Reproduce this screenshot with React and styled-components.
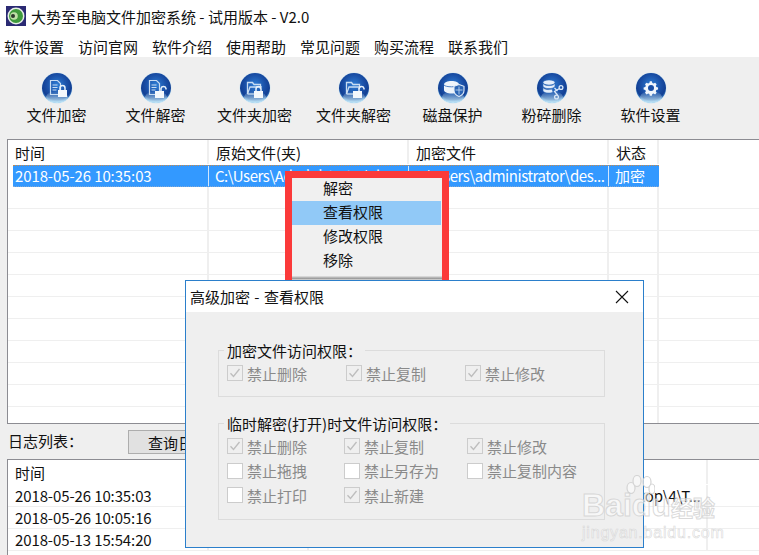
import React from "react";
import styled, { createGlobalStyle } from "styled-components";

const Global = createGlobalStyle`
  html, body { margin: 0; padding: 0; background: #fff; overflow: hidden; }
  * { box-sizing: border-box; }
  body { font-family: "Noto Sans CJK SC", "Noto Sans", sans-serif; font-size: 15px; color: #111; }
`;

const Win = styled.div`
  position: relative;
  width: 759px;
  height: 555px;
  overflow: hidden;
  display: flex;
  flex-direction: column;
  background: #efefef;
`;
const TitleBar = styled.div`
  height: 32px;
  flex: none;
  background: #fff;
  display: flex;
  align-items: center;
  padding-left: 6px;
  gap: 5px;
  line-height: 31px;
`;
const MenuBar = styled.div`
  height: 25px;
  flex: none;
  background: #fff;
  display: flex;
  padding-left: 4px;
  gap: 14px;
  line-height: 29px;
`;
const Toolbar = styled.div`
  height: 82px;
  flex: none;
  display: flex;
  padding: 15px 0 0 7px;
`;
const Tool = styled.div`
  width: 99px;
  display: flex;
  flex-direction: column;
  align-items: center;
  line-height: 22px;
  svg { display: block; }
`;
const Panel = styled.div`
  margin-left: 7px;
  background: #fff;
  border: 1px solid #8c8c92;
  border-right: 0;
  height: ${(p) => p.$h}px;
  overflow: hidden;
  flex: none;
`;
const Row = styled.div`
  display: grid;
  grid-template-columns: ${(p) => p.$cols};
  height: ${(p) => p.$h || 22}px;
  line-height: ${(p) => p.$h || 22}px;
  border-bottom: 1px solid ${(p) => (p.$header ? "transparent" : "#efefef")};
`;
const Cell = styled.div`
  border-right: 2px solid ${(p) => (p.$noLine ? "transparent" : "#efefef")};
  padding: 0 5px 0 7px;
  white-space: nowrap;
  overflow: hidden;
  text-align: ${(p) => p.$align || "left"};
  letter-spacing: ${(p) => (p.$num ? "-0.11px" : "0")};
`;
const SelectedRow = styled.div`
  display: grid;
  grid-template-columns: 196px 200px 200px 50px;
  margin-left: 5px;
  width: 646px;
  height: 22px;
  line-height: 20px;
  background: #3399ff;
  color: #fff;
  border-top: 1px dotted #c98a4a;
  border-bottom: 1px dotted #7fa8d8;
`;
const SelCell = styled.div`
  border-right: 1px solid #cfe6ff;
  padding-left: ${(p) => p.$pad}px;
  white-space: nowrap;
  overflow: hidden;
  letter-spacing: ${(p) => (p.$tight ? "-0.45px" : "-0.11px")};
  &:last-child { border-right: 0; }
`;
const LogBar = styled.div`
  height: 35px;
  flex: none;
  display: flex;
  align-items: center;
  padding-left: 8px;
`;
const LogLabel = styled.span`
  width: 120px;
  margin-bottom: 3px;
`;
const QueryButton = styled.div`
  width: 110px;
  height: 24px;
  background: #e1e1e1;
  border: 1px solid #adadad;
  line-height: 23px;
  padding-left: 19px;
`;

/* overlays */
const RedBox = styled.div`
  position: absolute;
  left: 285px;
  top: 171px;
  width: 164px;
  height: 112px;
  border: 7px solid #fb3a3a;
  border-bottom: 0;
  background: #f0f0f0;
`;
const Menu = styled.div`
  display: flex;
  flex-direction: column;
  height: 100%;
`;
const MenuItem = styled.div`
  height: 24px;
  line-height: 22px;
  padding-left: 31px;
  width: 149px;
  background: ${(p) => (p.$active ? "#91c9f7" : "transparent")};
  &:first-child { height: 23px; line-height: 20px; }
`;
const MenuShadow = styled.div`
  margin-top: 3px;
  height: 4px;
  width: 150px;
  background: linear-gradient(#e6e6e6, #999 60%, #ddd);
`;
const Dialog = styled.div`
  position: absolute;
  left: 185px;
  top: 280px;
  width: 459px;
  height: 268px;
  border: 1px solid #2b7fcb;
  background: #efefef;
  display: flex;
  flex-direction: column;
`;
const DialogTitle = styled.div`
  height: 31px;
  flex: none;
  background: #fff;
  display: flex;
  align-items: center;
  justify-content: space-between;
  padding: 0 14px 0 4px;
  line-height: 31px;
  word-spacing: 1px;
`;
const DialogBody = styled.div`
  padding: 38px 38px 0 32px;
  display: flex;
  flex-direction: column;
  gap: 26px;
`;
const Group = styled.div`
  position: relative;
  height: ${(p) => p.$h}px;
  flex: none;
  border: 1px solid #dcdcdc;
  padding: ${(p) => p.$pt}px 0 0 8px;
  display: grid;
  grid-template-columns: ${(p) => p.$cols};
  grid-auto-rows: 24.5px;
`;
const Legend = styled.span`
  position: absolute;
  left: 5px;
  top: -10px;
  padding: 0 3px;
  background: #efefef;
  line-height: 20px;
  white-space: nowrap;
`;
const Check = styled.div`
  display: flex;
  align-items: center;
  gap: 4px;
  color: #8a8a8a;
  white-space: nowrap;
`;
const Box = styled.span`
  width: 16px;
  height: 16px;
  flex: none;
  border: 1px solid #cccccc;
  background: ${(p) => (p.$checked ? "#efefef" : "#fff")};
  display: flex;
  align-items: center;
  justify-content: center;
`;
const Watermark = styled.div`
  position: absolute;
  left: 581px;
  top: 475px;
  width: 140px;
  height: 66px;
  pointer-events: none;
  color: rgba(255, 255, 255, 0.55);
  font-family: "Liberation Sans", sans-serif;
`;
const BaiduWord = styled.div`
  position: absolute;
  left: 1px;
  top: 12px;
  display: flex;
  align-items: baseline;
  white-space: nowrap;
  font-size: 32px;
  font-weight: 700;
  line-height: 36px;
  -webkit-text-stroke: 1px rgba(205, 205, 205, 0.75);
`;
const JingWord = styled.div`
  position: absolute;
  left: 1px;
  top: 49px;
  white-space: nowrap;
  font-size: 16px;
  line-height: 17px;
  letter-spacing: 0.8px;
  -webkit-text-stroke: 0.6px rgba(205, 205, 205, 0.75);
`;
const JingCn = styled.span`
  font-family: "Noto Sans CJK SC", sans-serif;
  font-size: 22px;
`;
const Paw = styled.svg`
  position: absolute;
  left: 44px;
  top: 0;
`;

const Grad = ({ id }) => (
  <defs>
    <radialGradient id={id} cx="50%" cy="40%" r="62%">
      <stop offset="0" stopColor="#2f7fd6" />
      <stop offset="0.55" stopColor="#1a4fa6" />
      <stop offset="0.8" stopColor="#123f93" />
      <stop offset="1" stopColor="#5fb0ea" />
    </radialGradient>
    <linearGradient id={id + "s"} x1="0" y1="0" x2="0" y2="1">
      <stop offset="0" stopColor="#bfe6f7" stopOpacity="0" />
      <stop offset="1" stopColor="#cdeefb" stopOpacity="0.95" />
    </linearGradient>
  </defs>
);

const lock = (x, y, open) => (
  <g>
    <rect x={x} y={y} width="9" height="7" fill="#f4f8fc" />
    {open ? (
      <path d={`M${x + 6} ${y} v-2.500 a2.600 2.600 0 0 1 5 0 v1`} fill="none" stroke="#e8f2fb" strokeWidth="1.500" />
    ) : (
      <path d={`M${x + 2} ${y} v-2 a2.500 2.500 0 0 1 5 0 v2`} fill="none" stroke="#e8f2fb" strokeWidth="1.500" />
    )}
  </g>
);
const doc = (
  <g fill="none" stroke="#c9ddf2" strokeWidth="1.200">
    <path d="M8.500 7.500h7l3 3v11h-10z" />
    <path d="M10.500 12h5M10.500 14.500h5M10.500 17h4" />
  </g>
);
const folder = (
  <g fill="none" stroke="#c9ddf2" strokeWidth="1.300">
    <path d="M7.500 21v-11.500h5l1.500 2h6.500v3" />
    <path d="M7.500 21l2.500-7h11l-1 2" />
    <path d="M7.500 21h9" />
  </g>
);
const glyphs = {
  fileLock: <>{doc}{lock(16, 17, false)}</>,
  fileOpen: <>{doc}{lock(14, 18, true)}</>,
  folderLock: <>{folder}{lock(14, 18, false)}</>,
  folderOpen: <>{folder}{lock(14, 18, true)}</>,
  disk: (
    <>
      <path d="M6 11.500c0-2.200 3.500-3.500 7.500-3.500s7.500 1.300 7.500 3.500v5.500c0 2.200-3.500 3.500-7.500 3.500s-7.500-1.300-7.500-3.500z" fill="#eef4fb" />
      <path d="M6 12c1.500 2.400 13.500 2.400 15 0" fill="none" stroke="#3f75bd" strokeWidth="0.900" />
      <path d="M21 11.500l5 1.800v4.200c0 3-2.500 5-5 6-2.500-1-5-3-5-6v-4.200z" fill="#2a64b4" stroke="#e4eefa" strokeWidth="1.100" />
      <path d="M21 13.500v8M17.500 17h7" stroke="#b9d3f0" strokeWidth="0.900" />
    </>
  ),
  shred: (
    <>
      <g fill="#e4eefa" stroke="#2a64b4" strokeWidth="0.600">
        <ellipse cx="12" cy="9.500" rx="6" ry="2.600" />
        <path d="M6 10v3c0 1.400 2.700 2.600 6 2.600s6-1.200 6-2.600v-3c0 1.400-2.700 2.600-6 2.600s-6-1.200-6-2.600z" />
        <path d="M6 14.500v3c0 1.400 2.700 2.600 6 2.600 2 0 3-.3 4-1l-1-3c-3 1-8 .5-9-1.600z" />
      </g>
      <g fill="none" stroke="#d9e8f8" strokeWidth="1.300">
        <circle cx="24" cy="14.500" r="1.900" />
        <circle cx="19.500" cy="24" r="1.900" />
        <path d="M22.500 15.500l-5 3 3 3.500M17.500 15l3 3" />
      </g>
    </>
  ),
  gear: (
    <>
      <path
        d="M15 8.200l1 0 .6 2.100 1.500.6 1.900-1 1.900 1.900-1 1.900.6 1.500 2.100.6v2.400l-2.100.6-.6 1.500 1 1.900-1.900 1.900-1.900-1-1.500.6-.6 2.100h-2.400l-.6-2.100-1.500-.6-1.900 1-1.900-1.900 1-1.900-.6-1.500-2.100-.6v-2.400l2.100-.6.6-1.500-1-1.900 1.900-1.900 1.900 1 1.500-.6.6-2.100z"
        fill="#f1f6fc"
        transform="translate(15 15) scale(0.82) translate(-15 -16.300)"
      />
      <circle cx="15" cy="15" r="3" fill="#1a4fa6" />
    </>
  ),
};

const Orb = ({ kind }) => (
  <svg width="32" height="32" viewBox="-1 -1 32 32">
    <Grad id={kind} />
    <circle cx="15" cy="15" r="15.500" fill="#bfe3f5" opacity="0.6" />
    <circle cx="15" cy="15" r="15" fill={`url(#${kind})`} />
    <ellipse cx="15" cy="24" rx="11" ry="6" fill={`url(#${kind}s)`} />
    {glyphs[kind]}
  </svg>
);

const AppIcon = () => (
  <svg width="20" height="20" viewBox="0 0 20 20">
    <rect width="20" height="20" fill="#2b2a73" />
    <circle cx="10" cy="10" r="8.500" fill="#e8efe8" />
    <circle cx="10" cy="10" r="7" fill="#3f9a3c" />
    <circle cx="8" cy="10" r="3.800" fill="#bfe0a8" />
    <circle cx="7" cy="10" r="2" fill="#2c3a2c" />
  </svg>
);

const Tick = () => (
  <svg width="12" height="12" viewBox="0 0 12 12">
    <path d="M1.500 6.200l3 3.300 6-7.500" fill="none" stroke="#bdbdbd" strokeWidth="1.300" />
  </svg>
);

const CheckItem = ({ label, on }) => (
  <Check>
    <Box $checked={on}>{on && <Tick />}</Box>
    {label}
  </Check>
);

const menus = ["软件设置", "访问官网", "软件介绍", "使用帮助", "常见问题", "购买流程", "联系我们"];
const tools = [
  ["fileLock", "文件加密"],
  ["fileOpen", "文件解密"],
  ["folderLock", "文件夹加密"],
  ["folderOpen", "文件夹解密"],
  ["disk", "磁盘保护"],
  ["shred", "粉碎删除"],
  ["gear", "软件设置"],
];
const mainCols = "201px 200px 200px 50px 1fr";
const logCols = "201px 100px 399px 1fr";

const group1 = [
  ["禁止删除", true],
  ["禁止复制", true],
  ["禁止修改", true],
];
const group2 = [
  ["禁止删除", true],
  ["禁止复制", true],
  ["禁止修改", true],
  ["禁止拖拽", false],
  ["禁止另存为", false],
  ["禁止复制内容", false],
  ["禁止打印", false],
  ["禁止新建", true],
];

export default function App() {
  return (
    <Win>
      <Global />
      <TitleBar>
        <AppIcon />
        <span>大势至电脑文件加密系统 - 试用版本 - V2.0</span>
      </TitleBar>
      <MenuBar>
        {menus.map((m) => (
          <span key={m}>{m}</span>
        ))}
      </MenuBar>
      <Toolbar>
        {tools.map(([k, t]) => (
          <Tool key={k}>
            <Orb kind={k} />
            <span>{t}</span>
          </Tool>
        ))}
      </Toolbar>
      <Panel $h={285}>
        <Row $cols={mainCols} $h={25} $header>
          <Cell>时间</Cell>
          <Cell>原始文件(夹)</Cell>
          <Cell>加密文件</Cell>
          <Cell>状态</Cell>
          <Cell $noLine />
        </Row>
        <SelectedRow>
          <SelCell $pad={2}>2018-05-26 10:35:03</SelCell>
          <SelCell $pad={6} $tight>C:\Users\Administrator\d...</SelCell>
          <SelCell $pad={6} $tight>C:\Users\administrator\des...</SelCell>
          <SelCell $pad={6}>加密</SelCell>
        </SelectedRow>
        {Array.from({ length: 11 }, (_, i) => (
          <Row key={i} $cols={mainCols}>
            <Cell />
            <Cell />
            <Cell />
            <Cell />
            <Cell $noLine />
          </Row>
        ))}
      </Panel>
      <LogBar>
        <LogLabel>日志列表：</LogLabel>
        <QueryButton>查询日志</QueryButton>
      </LogBar>
      <Panel $h={100}>
        <Row $cols={logCols} $h={25} $header>
          <Cell $noLine>时间</Cell>
          <Cell $noLine />
          <Cell />
          <Cell $noLine />
        </Row>
        {[
          ["2018-05-26 10:35:03", "C:\\Users\\Administrator\\Desktop\\4\\T..."],
          ["2018-05-26 10:05:16", ""],
          ["2018-05-13 15:54:20", ""],
        ].map(([d, p]) => (
          <Row key={d} $cols={logCols}>
            <Cell $num>{d}</Cell>
            <Cell />
            <Cell $align="right">{p}</Cell>
            <Cell $noLine />
          </Row>
        ))}
      </Panel>

      <RedBox>
        <Menu>
          <MenuItem>解密</MenuItem>
          <MenuItem $active>查看权限</MenuItem>
          <MenuItem>修改权限</MenuItem>
          <MenuItem>移除</MenuItem>
          <MenuShadow />
        </Menu>
      </RedBox>

      <Dialog>
        <DialogTitle>
          <span>高级加密 - 查看权限</span>
          <svg width="14" height="14" viewBox="0 0 14 14">
            <path d="M1 1l12 12M13 1L1 13" stroke="#111" strokeWidth="1.100" fill="none" />
          </svg>
        </DialogTitle>
        <DialogBody>
          <Group $h={47} $pt={10} $cols="119px 119px 1fr">
            <Legend>加密文件访问权限：</Legend>
            {group1.map(([l, c]) => (
              <CheckItem key={l} label={l} on={c} />
            ))}
          </Group>
          <Group $h={97} $pt={10} $cols="117px 123px 1fr">
            <Legend>临时解密(打开)时文件访问权限：</Legend>
            {group2.map(([l, c]) => (
              <CheckItem key={l} label={l} on={c} />
            ))}
          </Group>
        </DialogBody>
      </Dialog>

      <Watermark>
        <Paw width="30" height="30" viewBox="0 0 30 30">
          <g fill="rgba(255,255,255,0.5)" stroke="#d4d4d4" strokeWidth="1.200">
            <ellipse cx="6" cy="13" rx="4" ry="5.500" />
            <ellipse cx="12" cy="6" rx="4" ry="5.500" />
            <ellipse cx="22" cy="7" rx="4" ry="5.500" />
            <ellipse cx="27" cy="14" rx="3" ry="5" />
          </g>
        </Paw>
        <BaiduWord>
          Baidu<JingCn>经验</JingCn>
        </BaiduWord>
        <JingWord>jingyan.baidu.com</JingWord>
      </Watermark>
    </Win>
  );
}
